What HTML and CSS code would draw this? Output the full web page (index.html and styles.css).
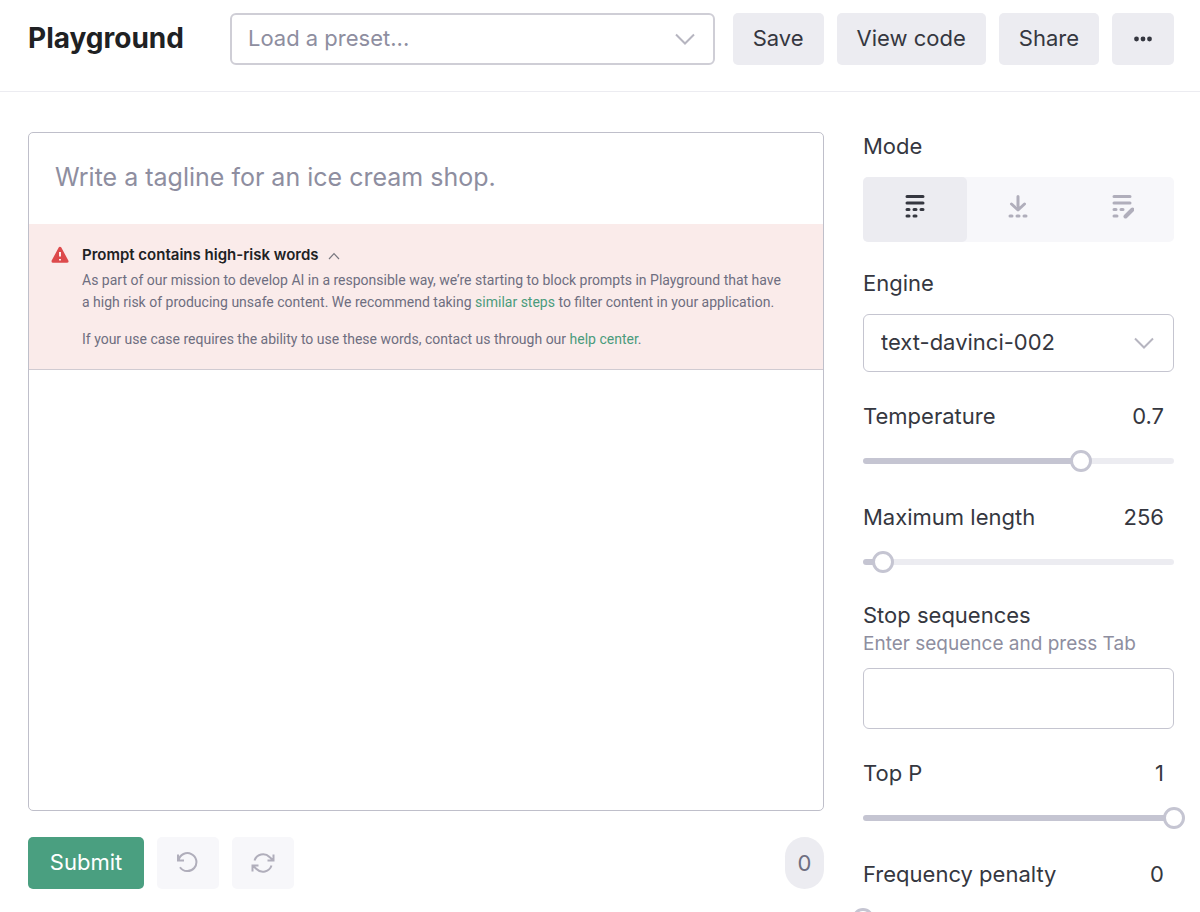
FILE: index.html
```html
<!DOCTYPE html>
<html lang="en">
<head>
    <meta charset="UTF-8" />
    <meta name="viewport" content="width=device-width, initial-scale=1.0"/>
    <title>Playground</title>
    <link rel="stylesheet" href="styles.css">
</head>
<body>
    <header class="header">
        <h1>Playground</h1>
        <div class="select-wrap preset">
            <select class="placeholder" aria-label="Load a preset">
                <option>Load a preset...</option>
            </select>
            <svg class="chevron" width="20" height="12" viewBox="0 0 20 12"><path d="M1 1.5l9 9 9-9"/></svg>
        </div>
        <div class="header-actions">
            <button type="button" class="btn">Save</button>
            <button type="button" class="btn">View code</button>
            <button type="button" class="btn">Share</button>
            <button type="button" class="btn btn-icon" aria-label="More">
                <svg width="20" height="6" viewBox="0 0 20 6" fill="#353740"><circle cx="3.5" cy="3" r="2.4"/><circle cx="10" cy="3" r="2.4"/><circle cx="16.5" cy="3" r="2.4"/></svg>
            </button>
        </div>
    </header>

    <main class="main">
        <form class="workspace" id="promptForm">
            <div class="editor">
                <textarea class="prompt" aria-label="Prompt" placeholder="Write a tagline for an ice cream shop."></textarea>
                <section class="notice">
                    <svg class="notice-icon" width="18" height="18" viewBox="0 0 18 18">
                        <path d="M9 2.2L16 15.3H2z" fill="#dd4a4c" stroke="#dd4a4c" stroke-width="3" stroke-linejoin="round"/>
                        <path d="M9 6v4.4M9 13v1.4" stroke="#fff" stroke-width="1.8"/>
                    </svg>
                    <div class="notice-body">
                        <h2>Prompt contains high-risk words
                            <svg width="12" height="8" viewBox="0 0 12 8"><path d="M1 7l5-5.3L11 7" fill="none" stroke="#77777f" stroke-width="1.2"/></svg>
                        </h2>
                        <p>As part of our mission to develop AI in a responsible way, we’re starting to block prompts in Playground that have a high risk of producing unsafe content. We recommend taking <a href="#">similar steps</a> to filter content in your application.</p>
                        <p>If your use case requires the ability to use these words, contact us through our <a href="#">help center</a>.</p>
                    </div>
                </section>
            </div>
            <div class="toolbar">
                <button type="submit" class="btn btn-primary">Submit</button>
                <button type="button" class="btn btn-icon btn-light" aria-label="Undo">
                    <svg width="24" height="24" viewBox="0 0 24 24"><path d="M2 3.5v6h6M2.6 9.3A9 9 0 1 1 4 16.2"/></svg>
                </button>
                <button type="button" class="btn btn-icon btn-light" aria-label="Regenerate">
                    <svg width="24" height="24" viewBox="0 0 24 24"><path d="M22.5 3.5v6h-6M1.5 20.5v-6h6M3.5 9.5a9 9 0 0 1 15-3.5l4 3.5M20.5 14.5a9 9 0 0 1-15 3.5l-4-3.5"/></svg>
                </button>
                <output class="count">0</output>
            </div>
        </form>

        <aside class="sidebar">
            <div class="field">
                <span class="label" id="modeLabel">Mode</span>
                <div class="segmented" role="group" aria-labelledby="modeLabel">
                    <button type="button" class="active" aria-label="Complete">
                        <svg width="24" height="26" viewBox="0 0 24 26"><path d="M4 2.5h16M4 9h16M4 15.5h2M11 15.5h2M18 15.5h2M4 22h2M11 22h2"/></svg>
                    </button>
                    <button type="button" aria-label="Insert">
                        <svg width="24" height="26" viewBox="0 0 24 26"><path d="M12 2.5v13M5.500 10l6.500 6 6.500-6M4 22h2M11 22h2M18 22h2"/></svg>
                    </button>
                    <button type="button" aria-label="Edit">
                        <svg width="24" height="26" viewBox="0 0 24 26"><path d="M4 2.5h16M4 9h16M4 15.5h2M11 15.5h2M4 22h3"/><path class="pencil" d="M15.5 22.5l7-7"/></svg>
                    </button>
                </div>
            </div>

            <div class="field field-text">
                <label class="label" for="engine">Engine</label>
                <div class="select-wrap engine">
                    <select id="engine">
                        <option>text-davinci-002</option>
                    </select>
                    <svg class="chevron" width="20" height="12" viewBox="0 0 20 12"><path d="M1 1.5l9 9 9-9"/></svg>
                </div>
            </div>

            <div class="field">
                <div class="field-head">
                    <label class="label" for="temperature">Temperature</label>
                    <output for="temperature">0.7</output>
                </div>
                <div class="slider" style="--value: 70%">
                    <input type="range" id="temperature" min="0" max="1" step="0.01" value="0.7">
                </div>
            </div>

            <div class="field">
                <div class="field-head">
                    <label class="label" for="maxLength">Maximum length</label>
                    <output for="maxLength">256</output>
                </div>
                <div class="slider" style="--value: 6%">
                    <input type="range" id="maxLength" min="0" max="4000" step="1" value="256">
                </div>
            </div>

            <div class="field field-text">
                <label class="label" for="stop">Stop sequences</label>
                <p class="hint" id="stopHint">Enter sequence and press Tab</p>
                <input type="text" id="stop" aria-describedby="stopHint">
            </div>

            <div class="field">
                <div class="field-head">
                    <label class="label" for="topP">Top P</label>
                    <output for="topP">1</output>
                </div>
                <div class="slider" style="--value: 100%">
                    <input type="range" id="topP" min="0" max="1" step="0.01" value="1">
                </div>
            </div>

            <div class="field">
                <div class="field-head">
                    <label class="label" for="frequency">Frequency penalty</label>
                    <output for="frequency">0</output>
                </div>
                <div class="slider" style="--value: 0%">
                    <input type="range" id="frequency" min="0" max="2" step="0.01" value="0">
                </div>
            </div>
        </aside>
    </main>

    <script>
        document.getElementById('promptForm').addEventListener('submit', function(e) {
            e.preventDefault();
        });

        // Keep the filled part of the track and the number in step with the thumb
        document.querySelectorAll('.slider input').forEach(function(input) {
            input.addEventListener('input', function() {
                const percent = (input.value - input.min) / (input.max - input.min) * 100;
                input.parentElement.style.setProperty('--value', percent + '%');
                document.querySelector('output[for="' + input.id + '"]').value = input.value;
            });
        });
    </script>
</body>
</html>
```
FILE: styles.css
```css
* {
    margin: 0;
    padding: 0;
    box-sizing: border-box;
}

body {
    display: flex;
    flex-direction: column;
    height: 100vh;
    overflow: hidden;
    background: #fff;
    color: #353740;
    font-family: Inter, 'Liberation Sans', sans-serif;
    font-size: 22px;
    line-height: 28px;
}

button, input, select, textarea {
    font: inherit;
    color: inherit;
}

a {
    color: #4a9b7c;
    text-decoration: none;
}

/* Header */
.header {
    display: flex;
    align-items: center;
    padding: 13px 26px 26px 28px;
    border-bottom: 1px solid #ececf1;
}

h1 {
    margin-right: 46px;
    padding-bottom: 3px;
    color: #202123;
    font-size: 28px;
    line-height: 36px;
    font-weight: 700;
}

.header-actions {
    display: flex;
    gap: 13px;
    margin-left: 18px;
}

.btn {
    display: flex;
    align-items: center;
    justify-content: center;
    height: 52px;
    padding: 0 20px 3px;
    border: none;
    border-radius: 5px;
    background: #ececf1;
    white-space: nowrap;
    cursor: pointer;
}

.btn-icon {
    width: 62px;
    padding: 0;
}

.btn-light {
    background: #f7f7fa;
}

.btn-light svg {
    fill: none;
    stroke: #b0aebb;
    stroke-width: 2;
}

.btn-primary {
    min-width: 116px;
    background: #4a9f80;
    color: #fff;
}

/* Drop-downs */
.select-wrap {
    position: relative;
}

.select-wrap select {
    width: 100%;
    height: 100%;
    padding: 0 50px 3px 17px;
    border: 1px solid #c5c5d0;
    border-radius: 6px;
    background: #fff;
    appearance: none;
}

.select-wrap .placeholder {
    padding-left: 16px;
    border: 2px solid #cfced6;
    color: #8e8ea0;
}

.preset {
    flex: 1;
    height: 52px;
}

.engine {
    height: 58px;
    margin-top: 17px;
}

.chevron {
    position: absolute;
    top: calc(50% - 6px);
    right: 20px;
    fill: none;
    stroke: #b6b5c0;
    stroke-width: 2;
    pointer-events: none;
}

/* Main area */
.main {
    flex: 1;
    display: grid;
    grid-template-columns: minmax(0, 1fr) 311px;
    grid-template-rows: minmax(0, 1fr);
    gap: 39px;
    min-height: 0;
    padding: 40px 26px 0 28px;
}

.workspace {
    display: flex;
    flex-direction: column;
    min-height: 0;
    padding-bottom: 23px;
}

.editor {
    flex: 1;
    border: 1px solid #bfbfca;
    border-radius: 5px;
}

.prompt {
    display: block;
    width: 100%;
    height: 91px;
    padding: 26px;
    border: none;
    outline: none;
    resize: none;
    background: none;
    font-size: 25px;
    line-height: 36px;
}

.prompt::placeholder {
    color: #8e8ea0;
}

.notice {
    display: flex;
    gap: 13px;
    padding: 19px 33px 19px 22px;
    border-bottom: 1px solid #d0cbd2;
    background: #faebea;
    color: #6e6e80;
    font-family: Roboto, 'Liberation Sans', sans-serif;
    font-size: 14px;
    line-height: 22px;
}

.notice-icon {
    flex: none;
    margin-top: 3px;
}

.notice h2 {
    margin-bottom: 2px;
    color: #202123;
    font-family: Inter, 'Liberation Sans', sans-serif;
    font-size: 15px;
    line-height: 24px;
    font-weight: 600;
}

.notice h2 svg {
    margin-left: 6px;
}

.notice p + p {
    margin-top: 15px;
}

.toolbar {
    display: flex;
    gap: 13px;
    margin-top: 26px;
}

.count {
    display: flex;
    align-items: center;
    justify-content: center;
    width: 39px;
    height: 52px;
    margin-left: auto;
    border-radius: 20px;
    background: #ececf1;
    color: #6e6e80;
}

/* Settings */
.field + .field {
    margin-top: 30px;
}

.field + .field-text {
    margin-top: 27px;
}

.label {
    display: block;
}

.field-head {
    display: flex;
    justify-content: space-between;
    padding-right: 10px;
}

.segmented {
    display: grid;
    grid-template-columns: repeat(3, 1fr);
    height: 65px;
    margin-top: 17px;
    border-radius: 5px;
    background: #f7f7fa;
}

.segmented button {
    display: flex;
    align-items: center;
    justify-content: center;
    padding-bottom: 6px;
    border: none;
    border-radius: 5px;
    background: none;
    color: #b0aebb;
    cursor: pointer;
}

.segmented .active {
    background: #ececf1;
    color: #353740;
}

.segmented svg {
    fill: none;
    stroke: currentColor;
    stroke-width: 3;
    stroke-linecap: round;
    stroke-linejoin: round;
}

.segmented .pencil {
    stroke-width: 4;
}

.hint {
    margin-top: 3px;
    color: #8e8ea0;
    font-size: 19px;
    line-height: 24px;
}

.field input[type="text"] {
    width: 100%;
    height: 61px;
    margin-top: 12px;
    padding: 0 17px;
    border: 1px solid #c5c5d0;
    border-radius: 6px;
    background: #fff;
}

.slider {
    display: grid;
    align-items: center;
    height: 24px;
    margin-top: 19px;
}

.slider::before {
    content: "";
    grid-area: 1 / 1;
    height: 6px;
    border-radius: 3px;
    background: linear-gradient(to right, #c5c5d2 var(--value), #ececf1 var(--value));
}

/* Half a thumb sticks out on each side so that it centers on the track ends */
.slider input {
    grid-area: 1 / 1;
    height: 24px;
    margin: 0 -11px;
    background: none;
    appearance: none;
    z-index: 1;
}

.slider input::-webkit-slider-thumb {
    width: 22px;
    height: 22px;
    border: 3px solid #c5c5d2;
    border-radius: 50%;
    background: #fff;
    appearance: none;
    cursor: pointer;
}

@media (max-width: 800px) {
    body {
        height: auto;
        overflow: auto;
    }

    .header {
        flex-wrap: wrap;
        gap: 13px;
    }

    .main {
        grid-template-columns: 1fr;
        grid-template-rows: auto;
    }

    .editor {
        min-height: 480px;
    }
}
```
